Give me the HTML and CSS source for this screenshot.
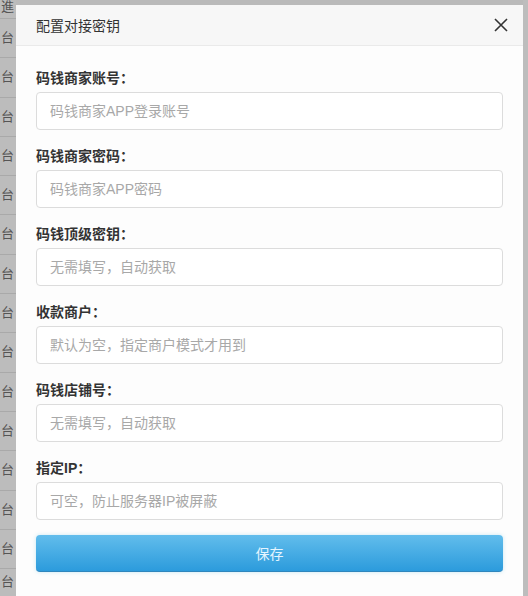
FILE: index.html
```html
<!DOCTYPE html>
<html lang="zh-CN">
<head>
<meta charset="utf-8">
<title>配置对接密钥</title>
<link rel="stylesheet" href="styles.css">
</head>
<body>
<div class="page">
  <div class="side">
    <div class="side-row first">進</div>
    <div class="side-row">台</div>
    <div class="side-row">台</div>
    <div class="side-row">台</div>
    <div class="side-row">台</div>
    <div class="side-row">台</div>
    <div class="side-row">台</div>
    <div class="side-row">台</div>
    <div class="side-row">台</div>
    <div class="side-row">台</div>
    <div class="side-row">台</div>
    <div class="side-row">台</div>
    <div class="side-row">台</div>
    <div class="side-row">台</div>
    <div class="side-row">台</div>
    <div class="side-row last">台</div>
  </div>
  <div class="modal">
    <div class="modal-header">
      <span class="modal-title">配置对接密钥</span>
      <span class="close">
        <svg width="14" height="14" viewBox="0 0 14 14"><path d="M1 1 L13 13 M13 1 L1 13" stroke="#333" stroke-width="1.6" fill="none"/></svg>
      </span>
    </div>
    <div class="modal-body">
      <div class="field">
        <label class="field-label">码钱商家账号：</label>
        <input class="field-input" type="text" placeholder="码钱商家APP登录账号">
      </div>
      <div class="field">
        <label class="field-label">码钱商家密码：</label>
        <input class="field-input" type="text" placeholder="码钱商家APP密码">
      </div>
      <div class="field">
        <label class="field-label">码钱顶级密钥：</label>
        <input class="field-input" type="text" placeholder="无需填写，自动获取">
      </div>
      <div class="field">
        <label class="field-label">收款商户：</label>
        <input class="field-input" type="text" placeholder="默认为空，指定商户模式才用到">
      </div>
      <div class="field">
        <label class="field-label">码钱店铺号：</label>
        <input class="field-input" type="text" placeholder="无需填写，自动获取">
      </div>
      <div class="field">
        <label class="field-label">指定IP：</label>
        <input class="field-input" type="text" placeholder="可空，防止服务器IP被屏蔽">
      </div>
      <button class="save-btn" type="button">保存</button>
    </div>
  </div>
  <div class="side-right"></div>
</div>
</body>
</html>
```

FILE: styles.css
```css
html, body {
  margin: 0;
  padding: 0;
  height: 100%;
  overflow: hidden;
}
body {
  font-family: "Liberation Sans", "Noto Sans CJK SC", sans-serif;
  background: #b9b9b9;
  color: #333;
}
.page {
  display: flex;
  height: 596px;
  width: 528px;
  background: #bababa;
}
.side {
  width: 16px;
  flex: none;
  overflow: hidden;
  display: flex;
  flex-direction: column;
  background: #bcbcbc;
}
.side-row {
  height: 38.3px;
  flex: none;
  border-top: 1px solid #a9a9a9;
  font-size: 13px;
  line-height: 38px;
  color: #555;
  padding-left: 1px;
  white-space: nowrap;
}
.side-row.first {
  height: 18px;
  line-height: 14px;
  border-top: none;
}
.side-row.last {
  height: 26px;
  line-height: 26px;
}
.modal {
  width: 507px;
  flex: none;
  margin-top: 5px;
  background: #fdfdfd;
  display: flex;
  flex-direction: column;
}
.side-right {
  flex: 1;
  background: #bdbdbd;
}
.modal-header {
  height: 41px;
  box-sizing: border-box;
  background: #f7f7f7;
  border-bottom: 1px solid #eaeaea;
  display: flex;
  align-items: center;
  justify-content: space-between;
  padding: 0 15px 0 20px;
}
.modal-title {
  font-size: 14px;
  color: #333;
}
.close {
  display: flex;
  align-items: center;
}
.modal-body {
  padding: 22px 20px 0 20px;
  display: flex;
  flex-direction: column;
}
.field {
  display: flex;
  flex-direction: column;
  margin-bottom: 16px;
}
.field:last-of-type {
  margin-bottom: 15px;
}
.field-label {
  font-size: 14px;
  font-weight: bold;
  line-height: 20px;
  color: #333;
  margin-bottom: 4px;
}
.field-input {
  height: 38px;
  box-sizing: border-box;
  border: 1px solid #dcdcdc;
  border-radius: 4px;
  padding: 0 13px;
  font-size: 14px;
  font-family: "Liberation Sans", "Noto Sans CJK SC", sans-serif;
  background: #fff;
  outline: none;
}
.field-input::placeholder {
  color: #a8a8a8;
}
.save-btn {
  height: 37px;
  border: none;
  border-bottom: 1px solid #2f86bd;
  border-radius: 4px;
  background: linear-gradient(to bottom, #62bdec, #2c9bdc);
  color: #e6f5ff;
  font-size: 14px;
  font-family: "Liberation Sans", "Noto Sans CJK SC", sans-serif;
  box-shadow: 0 0 4px rgba(120, 200, 230, 0.4);
}
```
